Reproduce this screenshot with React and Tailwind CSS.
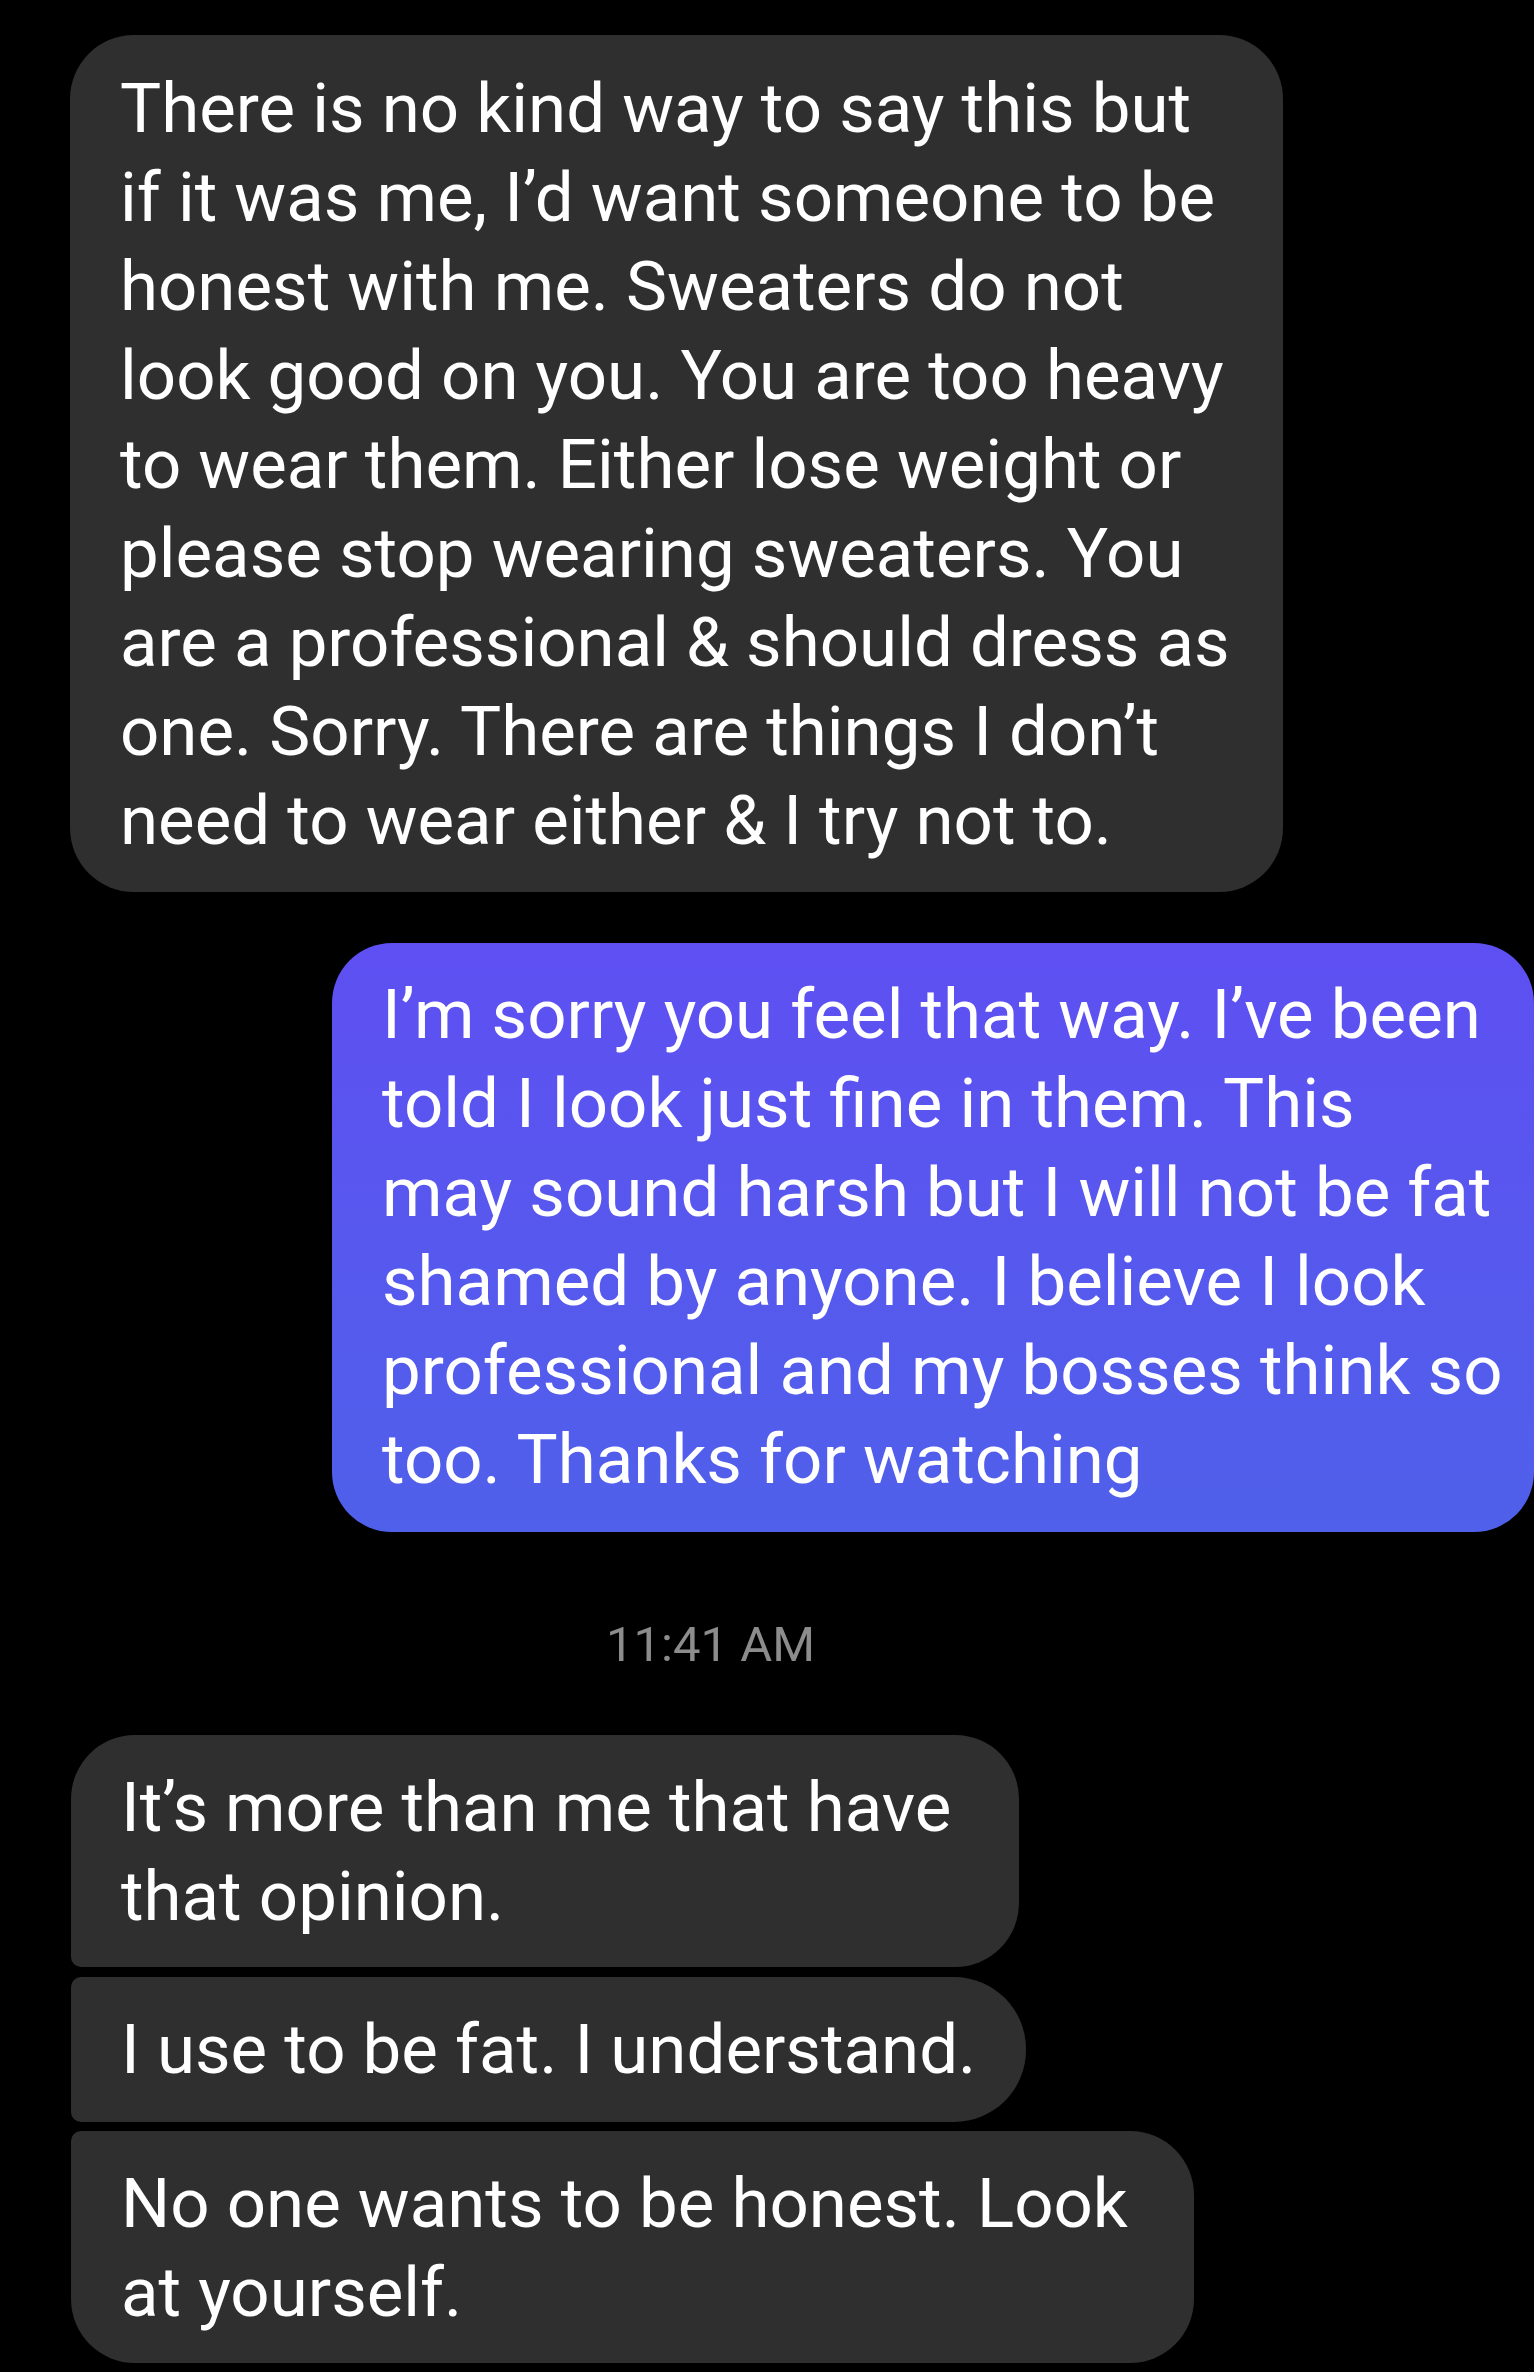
export default function App() {
  return (
    <div className="w-[1534px] h-[2372px] bg-black overflow-hidden font-['Roboto',sans-serif] text-white">
      <div className="pt-[35px] flex flex-col items-start">
        <div className="ml-[70px] w-[1213px] bg-[#2f2f2f] rounded-[64px] pl-[50px] pt-[29px] pb-[27px] text-[69px] leading-[89px] whitespace-nowrap">
          There is no kind way to say this but
          <br />
          if it was me, I’d want someone to be
          <br />
          honest with me. Sweaters do not
          <br />
          look good on you. You are too heavy
          <br />
          to wear them. Either lose weight or
          <br />
          please stop wearing sweaters. You
          <br />
          are a professional &amp; should dress as
          <br />
          one. Sorry. There are things I don’t
          <br />
          need to wear either &amp; I try not to.
        </div>

        <div className="mt-[51px] ml-[332px] w-[1202px] bg-gradient-to-b from-[#5e4ff2] to-[#4f60ea] rounded-[60px] pl-[50px] pt-[27px] pb-[28px] text-[69px] leading-[89px] whitespace-nowrap">
          I’m sorry you feel that way. I’ve been
          <br />
          told I look just fine in them. This
          <br />
          may sound harsh but I will not be fat
          <br />
          shamed by anyone. I believe I look
          <br />
          professional and my bosses think so
          <br />
          too. Thanks for watching
        </div>

        <div className="mt-[84px] ml-[606px] text-[49px] leading-[58px] text-[#8c8c8c] whitespace-nowrap">
          11:41 AM
        </div>

        <div className="mt-[61px] ml-[71px] w-[948px] bg-[#2f2f2f] rounded-tl-[64px] rounded-bl-[10px] rounded-r-[64px] pl-[50px] pt-[28px] pb-[26px] text-[69px] leading-[89px] whitespace-nowrap">
          It’s more than me that have
          <br />
          that opinion.
        </div>

        <div className="mt-[10px] ml-[71px] w-[955px] bg-[#2f2f2f] rounded-l-[10px] rounded-r-[72px] pl-[50px] pt-[28px] pb-[28px] text-[69px] leading-[89px] whitespace-nowrap">
          I use to be fat. I understand.
        </div>

        <div className="mt-[9px] ml-[71px] w-[1123px] bg-[#2f2f2f] rounded-tl-[10px] rounded-bl-[64px] rounded-r-[64px] pl-[50px] pt-[28px] pb-[26px] text-[69px] leading-[89px] whitespace-nowrap">
          No one wants to be honest. Look
          <br />
          at yourself.
        </div>
      </div>
    </div>
  );
}
